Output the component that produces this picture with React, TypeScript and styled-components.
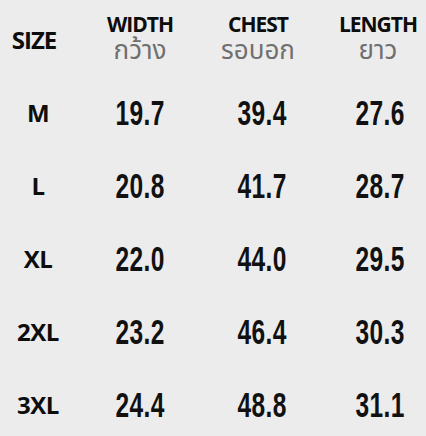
import React from 'react';
import styled, { createGlobalStyle } from 'styled-components';

const GlobalStyle = createGlobalStyle`
  html, body {
    margin: 0;
    padding: 0;
    background: #ececec;
  }
`;

const Styled_table = styled.div`
  width: 426px;
  height: 436px;
  background: #ececec;
  display: grid;
  grid-template-columns: 90px 100px 144px 92px;
  grid-template-rows: 76px repeat(5, 73px);
  align-items: center;
  justify-items: center;
  overflow: hidden;
`;

const Styled_head_cell = styled.div<{ $shift?: number; $drop?: number }>`
  display: flex;
  flex-direction: column;
  align-items: center;
  transform: translate(${(p) => p.$shift ?? 0}px, ${(p) => p.$drop ?? 0}px);
`;

const Styled_head_en = styled.div<{ $size?: number }>`
  font-family: 'Open Sans', 'Liberation Sans', sans-serif;
  font-weight: 700;
  font-size: ${(p) => p.$size ?? 21}px;
  letter-spacing: -1px;
  color: #0d0d0d;
  line-height: 22px;
`;

const Styled_head_th = styled.div`
  font-family: 'Noto Sans Thai', 'Noto Sans', 'DejaVu Sans', sans-serif;
  font-size: 26px;
  color: #6f6f6f;
  line-height: 32px;
`;

const Styled_size_label = styled.div`
  font-family: 'Open Sans', 'Liberation Sans', sans-serif;
  font-weight: 700;
  font-size: 24px;
  letter-spacing: -0.5px;
  color: #0d0d0d;
  transform: translateX(-7px);
`;

const Styled_value = styled.div`
  font-family: 'Liberation Sans', Arial, sans-serif;
  font-weight: 700;
  font-size: 35px;
  color: #111;
  transform: scaleX(0.7);
  letter-spacing: 0.5px;
`;

const sizes = [
  { size: 'M', width: '19.7', chest: '39.4', length: '27.6' },
  { size: 'L', width: '20.8', chest: '41.7', length: '28.7' },
  { size: 'XL', width: '22.0', chest: '44.0', length: '29.5' },
  { size: '2XL', width: '23.2', chest: '46.4', length: '30.3' },
  { size: '3XL', width: '24.4', chest: '48.8', length: '31.1' },
];

function App() {
  return (
    <>
      <GlobalStyle />
      <Styled_table>
        <Styled_head_cell $shift={-11} $drop={2}>
          <Styled_head_en $size={24}>SIZE</Styled_head_en>
        </Styled_head_cell>
        <Styled_head_cell $drop={2}>
          <Styled_head_en>WIDTH</Styled_head_en>
          <Styled_head_th>กว้าง</Styled_head_th>
        </Styled_head_cell>
        <Styled_head_cell $shift={-4} $drop={2}>
          <Styled_head_en>CHEST</Styled_head_en>
          <Styled_head_th>รอบอก</Styled_head_th>
        </Styled_head_cell>
        <Styled_head_cell $shift={-2} $drop={2}>
          <Styled_head_en>LENGTH</Styled_head_en>
          <Styled_head_th>ยาว</Styled_head_th>
        </Styled_head_cell>
        {sizes.map((row) => (
          <React.Fragment key={row.size}>
            <Styled_size_label>{row.size}</Styled_size_label>
            <Styled_value>{row.width}</Styled_value>
            <Styled_value>{row.chest}</Styled_value>
            <Styled_value>{row.length}</Styled_value>
          </React.Fragment>
        ))}
      </Styled_table>
    </>
  );
}

export default App;
